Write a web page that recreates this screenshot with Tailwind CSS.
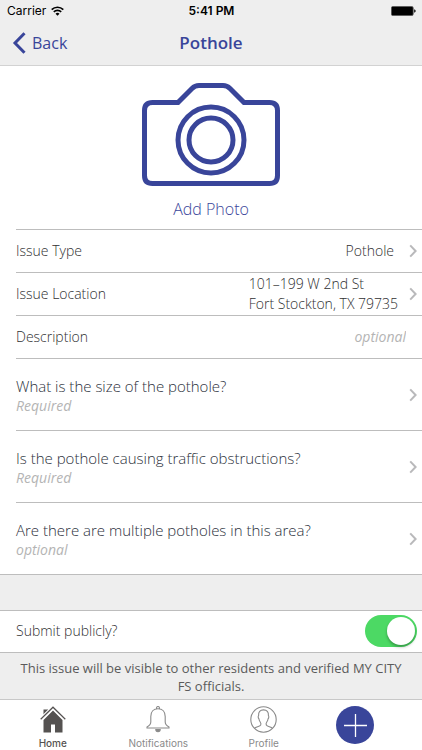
<!DOCTYPE html>
<html lang="en">
<head>
<meta charset="utf-8">
<meta name="viewport" content="width=device-width, initial-scale=1">
<title>Pothole</title>
<script src="https://cdn.jsdelivr.net/npm/@tailwindcss/browser@4"></script>
</head>
<body class="min-h-screen flex flex-col bg-white font-['Open_Sans',sans-serif] font-light text-[14px] leading-5 text-[#2f2f31]">
<svg class="hidden" aria-hidden="true">
  <symbol id="chevron" viewBox="0 0 8 14"><path d="M1.200 1.400 6.600 7l-5.400 5.600" fill="none" stroke="#b9b9bb" stroke-width="2"/></symbol>
</svg>

<header class="bg-[#eeeeee] border-b border-[#d2d2d2]">
  <div class="h-[22px] grid grid-cols-3 items-center pl-[7px] pr-[6px] font-['Inter',sans-serif] font-normal text-[12px] leading-4 text-black">
    <div class="flex items-center gap-[5px]">
      <span>Carrier</span>
      <svg class="w-[13px] h-[10px]" viewBox="0 0 13 10" fill="none" stroke="#000" stroke-width="1.7" aria-hidden="true"><path d="M.7 3.6a8.3 8.3 0 0 1 11.6 0M2.8 5.8a5.3 5.3 0 0 1 7.4 0"/><path d="M6.500 9.700 4.500 7.700a2.900 2.900 0 0 1 4 0z" fill="#000" stroke="none"/></svg>
    </div>
    <span class="text-center font-semibold">5:41 PM</span>
    <svg class="justify-self-end w-[25px] h-[10px]" viewBox="0 0 25 10" aria-hidden="true"><rect x=".4" y=".4" width="21.800" height="9.200" rx="1.500" fill="#000" stroke="#555" stroke-width=".8"/><path d="M23.200 3.200q1.500.5 1.500 1.800t-1.500 1.800z"/></svg>
  </div>
  <div class="h-[43px] grid grid-cols-[1fr_auto_1fr] items-center pl-3 pr-3 pb-px text-[#39459a]">
    <button type="button" class="justify-self-start flex items-center gap-[6px] text-[16px] leading-6 font-normal">
      <svg class="w-[14px] h-[22px]" viewBox="0 0 14 22" fill="none" stroke="currentColor" stroke-width="3" aria-hidden="true"><path d="M12.500 1.200 3 11l9.500 9.800"/></svg>
      Back
    </button>
    <h1 class="text-[17px] leading-6 font-semibold">Pothole</h1>
  </div>
</header>

<main class="grow">
  <button type="button" class="w-full h-[163px] pt-[17px] flex flex-col items-center gap-[11px] text-[#39459a]">
    <svg class="w-[138px] h-[103px]" viewBox="0 0 138 103" fill="none" stroke="currentColor" stroke-width="5" aria-hidden="true">
      <path d="M10.500 19.500H36L50 5.500Q53 2.500 57 2.500H81Q85 2.500 88 5.500L102 19.500H127.500Q135.500 19.500 135.500 27.500V92.500Q135.500 100.500 127.500 100.500H10.500Q2.500 100.500 2.500 92.500V27.500Q2.500 19.500 10.500 19.500Z"/>
      <circle cx="69" cy="57" r="33"/><circle cx="69" cy="57" r="22"/>
    </svg>
    <span class="text-[16px] leading-6">Add Photo</span>
  </button>

  <div class="pl-4">
    <button type="button" class="w-full h-[43px] border-t border-[#bdbdbd] pr-[5px] flex items-center text-left">
      <span class="grow">Issue Type</span><span class="mr-[15px]">Pothole</span>
      <svg class="w-2 h-[14px]" aria-hidden="true"><use href="#chevron"/></svg>
    </button>
    <button type="button" class="w-full h-[43px] border-t border-[#bdbdbd] pr-[5px] flex items-center text-left">
      <span class="grow">Issue Location</span><span class="mr-[11px]">101–199 W 2nd St<br>Fort Stockton, TX 79735</span>
      <svg class="w-2 h-[14px]" aria-hidden="true"><use href="#chevron"/></svg>
    </button>
    <div class="h-[43px] border-t border-[#bdbdbd] pr-4 flex items-center">
      <label for="description">Description</label>
      <input id="description" type="text" placeholder="optional" class="grow min-w-0 text-right outline-none placeholder:italic placeholder:font-normal placeholder:text-[#b4b4b4]">
    </div>
    <button type="button" class="w-full h-[72px] border-t border-[#bdbdbd] pr-[5px] flex items-center text-left">
      <span class="grow pt-[2px]"><span class="block text-[15px] text-[#2c313c]">What is the size of the pothole?</span><span class="block italic font-normal text-[#b4b4b4]">Required</span></span>
      <svg class="w-2 h-[14px]" aria-hidden="true"><use href="#chevron"/></svg>
    </button>
    <button type="button" class="w-full h-[72px] border-t border-[#bdbdbd] pr-[5px] flex items-center text-left">
      <span class="grow pt-[2px]"><span class="block text-[15px] text-[#2c313c]">Is the pothole causing traffic obstructions?</span><span class="block italic font-normal text-[#b4b4b4]">Required</span></span>
      <svg class="w-2 h-[14px]" aria-hidden="true"><use href="#chevron"/></svg>
    </button>
    <button type="button" class="w-full h-[72px] border-t border-[#bdbdbd] pr-[5px] flex items-center text-left">
      <span class="grow pt-[2px]"><span class="block text-[15px] text-[#2c313c]">Are there are multiple potholes in this area?</span><span class="block italic font-normal text-[#b4b4b4]">optional</span></span>
      <svg class="w-2 h-[14px]" aria-hidden="true"><use href="#chevron"/></svg>
    </button>
  </div>

  <div class="h-9 bg-[#eeeeee] border-t border-[#bdbdbd]"></div>
  <div class="h-[42px] border-t border-[#bdbdbd] pl-4 pr-[5px] pb-px flex items-center justify-between">
    <label for="public">Submit publicly?</label>
    <input id="public" type="checkbox" role="switch" checked class="appearance-none w-[52px] h-8 rounded-full bg-[#d8d8d8] checked:bg-[#4cd964] p-[2px] flex checked:justify-end before:block before:size-7 before:rounded-full before:bg-white before:shadow-[0_2px_3px_rgba(0,0,0,0.3)]">
  </div>
  <p class="bg-[#eeeeee] border-t border-[#bdbdbd] px-[15px] pt-[6px] pb-1 text-center text-[13px] leading-[18px] font-normal text-[#5a5a5a]">This issue will be visible to other residents and verified MY CITY FS officials.</p>
</main>

<nav class="h-[51px] border-t border-[#c8c8c8] grid grid-cols-4 font-['Inter',sans-serif] font-normal text-[10px] leading-3 text-[#8a8a8a]">
  <a href="#home" class="pt-[6px] flex flex-col items-center gap-1 font-medium text-[#555251]">
    <svg class="w-[26px] h-[27px]" viewBox="0 0 26 27" aria-hidden="true"><path fill="currentColor" d="M3.500 3.500h4.500v4L3.500 12zM13 4.500 22.500 14v12.500H15V18.500h-4v8H3.500V14z"/><path d="M.7 13.200 13 1.200l12.300 12" fill="none" stroke="#fff" stroke-width="3.500"/><path d="M.7 13.200 13 1.200l12.300 12" fill="none" stroke="currentColor" stroke-width="1.200"/></svg>
    Home
  </a>
  <a href="#notifications" class="pt-[6px] flex flex-col items-center gap-1">
    <svg class="w-6 h-[27px]" viewBox="0 0 24 27" fill="none" stroke="currentColor" stroke-width="1.100" aria-hidden="true"><path d="M10.500 2.800V2a1.500 1.500 0 0 1 3 0v.8M12 2.700C7.500 2.700 4.800 6 4.800 10.500v5.500c0 2.500-1 3.500-3.800 5v1h22v-1c-2.800-1.500-3.800-2.500-3.800-5v-5.500C19.200 6 16.500 2.700 12 2.700z"/><path d="M9.800 23.500h4.400a2.200 2.200 0 0 1-4.400 0z" fill="currentColor"/></svg>
    Notifications
  </a>
  <a href="#profile" class="pt-[6px] flex flex-col items-center gap-1">
    <svg class="size-[27px]" viewBox="0 0 27 27" fill="none" stroke="currentColor" stroke-width="1.100" aria-hidden="true"><circle cx="13.500" cy="13.500" r="12.700"/><path d="M4.500 22.300c1.500-1.400 5.500-1.800 6.200-3.200.4-1 .1-2.300-.5-3.100-.9-1.200-1.200-2.300-1.300-3.300-.8-.6-.9-2.500-.3-3.200-.3-3.700 1.500-5.600 4.900-5.600s5.200 1.900 4.900 5.600c.6.700.5 2.600-.3 3.200-.1 1-.4 2.100-1.300 3.300-.6.800-.9 2.100-.5 3.100.7 1.400 4.700 1.800 6.200 3.200"/></svg>
    Profile
  </a>
  <button type="button" aria-label="New issue" class="mt-[6px] mr-7 justify-self-center size-[38px] rounded-full bg-[#39459a] flex items-center justify-center">
    <svg class="size-[23px]" viewBox="0 0 23 23" stroke="#fff" stroke-width="1.300" aria-hidden="true"><path d="M11.500 0v23M0 11.500h23"/></svg>
  </button>
</nav>
</body>
</html>
